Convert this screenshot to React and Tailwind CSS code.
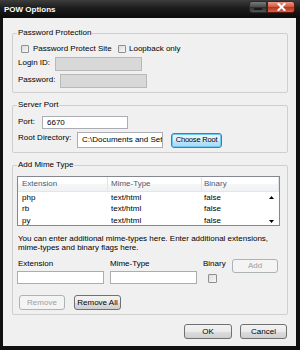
import React from "react";

const btn =
  "flex items-center justify-center rounded-[3px] border border-[#707070] bg-[linear-gradient(to_bottom,#f2f2f2_0%,#ebebeb_50%,#dddddd_51%,#cfcfcf_100%)] text-black whitespace-nowrap";
const btnDisabled =
  "flex items-center justify-center rounded-[3px] border border-[#adb2b5] bg-[#f4f4f4] text-[#a0a0a0] whitespace-nowrap";

function Check() {
  return (
    <span className="block w-[8px] h-[8px] shrink-0 border border-[#8e8f8f] rounded-[1px] bg-[linear-gradient(to_bottom_right,#dcdcdc,#f7f7f7)]" />
  );
}

function Group({ title, children, className = "" }) {
  return (
    <fieldset className={"ml-[9px] w-[276px] border border-[#cfcfcf] rounded-[2px] " + className}>
      <legend className="ml-[4px] px-[1px] leading-[10px]">{title}</legend>
      {children}
    </fieldset>
  );
}

export default function App() {
  const rows = [
    ["php", "text/html", "false"],
    ["rb", "text/html", "false"],
    ["py", "text/html", "false"],
  ];
  return (
    <div className="w-[300px] h-[350px] bg-[#111111] flex flex-col font-['Liberation_Sans',Arial,sans-serif] text-[8px] leading-[10px] text-black overflow-hidden">
      {/* Title bar */}
      <div className="h-[18px] shrink-0 flex items-start bg-[linear-gradient(to_bottom,#3d3d3d_0%,#1c1c1c_45%,#0b0b0b_100%)]">
        <div className="pl-[4px] pt-[5px] font-bold text-[8px] leading-[10px] text-white">POW Options</div>
        <div className="ml-auto mt-[1px] mr-[5px] flex">
          <div className="w-[18px] h-[12px] rounded-l-[3px] border border-[#2a2a2a] bg-[linear-gradient(to_bottom,#7a7a7a_0%,#4a4a4a_50%,#2e2e2e_51%,#555555_100%)] flex items-center justify-center">
            <span className="block w-[8px] h-[2px] bg-[#1a1a1a] mt-[3px]" />
          </div>
          <div className="w-[28px] h-[12px] rounded-r-[3px] border border-[#5a1a10] bg-[linear-gradient(to_bottom,#e89a88_0%,#d0573e_50%,#b8301a_51%,#d9634a_100%)] flex items-center justify-center">
            <svg width="9" height="8" viewBox="0 0 9 8">
              <path d="M1.5 1 L7.5 7 M7.5 1 L1.5 7" stroke="#ffffff" strokeWidth="2" strokeLinecap="square" />
            </svg>
          </div>
        </div>
      </div>

      {/* Client */}
      <div className="ml-[3px] w-[293px] h-[328px] bg-[#f0f0f0] flex flex-col">
        {/* Password Protection */}
        <Group title="Password Protection" className="mt-[10px] pb-[4px]">
          <div className="mt-[6px] h-[10px] flex items-center pl-[8px]">
            <div className="w-[97px] flex items-center gap-[4px]">
              <Check />
              <span>Password Protect Site</span>
            </div>
            <div className="flex items-center gap-[3px]">
              <Check />
              <span>Loopback only</span>
            </div>
          </div>
          <div className="mt-[3px] h-[14px] flex items-center pl-[5px]">
            <span className="w-[37px] -mt-[3px]">Login ID:</span>
            <div className="w-[87px] h-[14px] border border-[#b9b9b9] bg-[#d8d8d8]" />
          </div>
          <div className="mt-[3px] h-[14px] flex items-center pl-[5px]">
            <span className="w-[42px] -mt-[3px]">Password:</span>
            <div className="w-[87px] h-[14px] border border-[#b9b9b9] bg-[#d8d8d8]" />
          </div>
        </Group>

        {/* Server Port */}
        <Group title="Server Port" className="mt-[7px] pb-[4px]">
          <div className="mt-[6px] h-[13px] flex items-center pl-[5px]">
            <span className="w-[24px] -mt-[2px]">Port:</span>
            <div className="w-[86px] h-[13px] border border-[#abadb3] bg-white flex items-center pl-[4px]">6670</div>
          </div>
          <div className="mt-[3px] h-[16px] flex items-center pl-[5px]">
            <span className="w-[59px] -mt-[4px]">Root Directory:</span>
            <div className="w-[86px] h-[16px] border border-[#abadb3] bg-white pl-[4px] overflow-hidden">
              <div className="w-[120px] whitespace-nowrap leading-[14px]">C:\Documents and Settings</div>
            </div>
            <div className="ml-[8px] w-[51px] h-[15px] rounded-[3px] border border-[#3c7fb1] shadow-[inset_0_0_0_1px_#6fc8f0] bg-[linear-gradient(to_bottom,#eaf6fd_0%,#d9f0fc_50%,#bee6fd_51%,#a7d9f5_100%)] flex items-center justify-center whitespace-nowrap text-[7.5px] tracking-[-0.2px]">
              Choose Root
            </div>
          </div>
        </Group>

        {/* Add Mime Type */}
        <Group title="Add Mime Type" className="mt-[7px] pb-[4px]">
          <div className="mt-[6px] ml-[4px] w-[263px] h-[50px] border border-[#828790] bg-white flex flex-col overflow-hidden">
            <div className="h-[15px] shrink-0 flex items-center text-[#4c5a6c] bg-[linear-gradient(to_bottom,#ffffff_0%,#ffffff_50%,#f5f6f7_51%,#f0f1f2_100%)] border-b border-[#e5e5e5]">
              <div className="w-[90px] h-full flex items-center pl-[4px] border-r border-[#e5e5e5]">Extension</div>
              <div className="w-[94px] h-full flex items-center pl-[3px] border-r border-[#e5e5e5]">Mime-Type</div>
              <div className="w-[77px] h-full flex items-center pl-[2px] border-r border-[#e5e5e5]">Binary</div>
            </div>
            <div className="flex flex-1 min-h-0">
              <div className="flex-1 flex flex-col">
                {rows.map((r) => (
                  <div key={r[0]} className="h-[11.5px] shrink-0 flex items-center">
                    <div className="w-[90px] pl-[4px]">{r[0]}</div>
                    <div className="w-[94px] pl-[3px]">{r[1]}</div>
                    <div className="pl-[2px]">{r[2]}</div>
                  </div>
                ))}
              </div>
              <div className="w-[10px] flex flex-col justify-between items-center pt-[4px] pb-[2px] mr-[3px]">
                <svg width="5" height="3" viewBox="0 0 5 3"><path d="M0 3 L2.5 0 L5 3 Z" fill="#000" /></svg>
                <svg width="5" height="3" viewBox="0 0 5 3"><path d="M0 0 L5 0 L2.5 3 Z" fill="#000" /></svg>
              </div>
            </div>
          </div>

          <div className="mt-[8px] ml-[5px] leading-[9px]">
            You can enter additional mime-types here. Enter additional extensions,
            <br />
            mime-types and binary flags here.
          </div>

          <div className="mt-[7px] ml-[4px] flex items-start">
            <div className="w-[87px] flex flex-col">
              <span className="leading-[9px] pl-[1px]">Extension</span>
              <div className="mt-[3px] h-[13px] border border-[#abadb3] bg-white" />
            </div>
            <div className="ml-[6px] w-[87px] flex flex-col">
              <span className="leading-[9px]">Mime-Type</span>
              <div className="mt-[3px] h-[13px] border border-[#abadb3] bg-white" />
            </div>
            <div className="ml-[6px] w-[29px] flex flex-col">
              <span className="leading-[9px]">Binary</span>
              <div className="mt-[6px] ml-[5px]">
                <span className="block w-[9px] h-[9px] border border-[#8e8f8f] rounded-[1px] bg-[linear-gradient(to_bottom_right,#dcdcdc,#f7f7f7)]" />
              </div>
            </div>
            <div className={btnDisabled + " w-[46px] h-[14px]"}>Add</div>
          </div>

          <div className="mt-[11px] ml-[6px] flex items-center">
            <div className={btnDisabled + " w-[46px] h-[15px]"}>Remove</div>
            <div className={btn + " ml-[9px] w-[47px] h-[15px]"}>Remove All</div>
          </div>
        </Group>

        <div className="mt-[9px] mr-[9px] flex justify-end gap-[8px]">
          <div className={btn + " w-[48px] h-[15px]"}>OK</div>
          <div className={btn + " w-[47px] h-[15px]"}>Cancel</div>
        </div>
      </div>
    </div>
  );
}
